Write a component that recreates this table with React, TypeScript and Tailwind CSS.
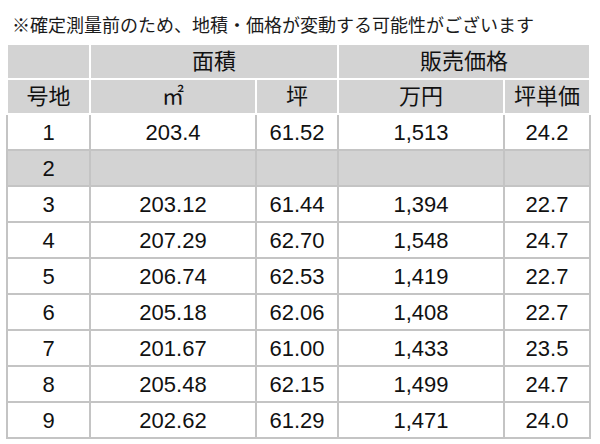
import React from 'react';

type Lot = {
  no: string;
  sqm: string;
  tsubo: string;
  price: string;
  unit: string;
};

const lots: Lot[] = [
  { no: '1', sqm: '203.4', tsubo: '61.52', price: '1,513', unit: '24.2' },
  { no: '2', sqm: '', tsubo: '', price: '', unit: '' },
  { no: '3', sqm: '203.12', tsubo: '61.44', price: '1,394', unit: '22.7' },
  { no: '4', sqm: '207.29', tsubo: '62.70', price: '1,548', unit: '24.7' },
  { no: '5', sqm: '206.74', tsubo: '62.53', price: '1,419', unit: '22.7' },
  { no: '6', sqm: '205.18', tsubo: '62.06', price: '1,408', unit: '22.7' },
  { no: '7', sqm: '201.67', tsubo: '61.00', price: '1,433', unit: '23.5' },
  { no: '8', sqm: '205.48', tsubo: '62.15', price: '1,499', unit: '24.7' },
  { no: '9', sqm: '202.62', tsubo: '61.29', price: '1,471', unit: '24.0' },
];

const font = { fontFamily: '"Liberation Sans", "Noto Sans CJK JP", sans-serif' };

export default function App() {
  return (
    <div className="w-[600px] h-[444px] bg-white text-[#111] overflow-hidden" style={font}>
      <p className="pl-[12px] pt-[14px] h-[43px] text-[18px] leading-[24px] text-[#1a1a1a]">
        ※確定測量前のため、地積・価格が変動する可能性がございます
      </p>

      <table className="ml-[6px] w-[583px] table-fixed border-collapse text-center">
        <colgroup>
          <col className="w-[83px]" />
          <col className="w-[166px]" />
          <col className="w-[82px]" />
          <col className="w-[166px]" />
          <col className="w-[86px]" />
        </colgroup>
        <thead className="text-[22px]">
          <tr className="h-[35px]">
            <th className="bg-[#d3d3d3] border-2 border-white font-normal"></th>
            <th colSpan={2} className="bg-[#d3d3d3] border-2 border-white font-normal">面積</th>
            <th colSpan={2} className="bg-[#d3d3d3] border-2 border-white font-normal">販売価格</th>
          </tr>
          <tr className="h-[34px]">
            <th className="bg-[#d3d3d3] border-2 border-white font-normal">号地</th>
            <th className="bg-[#d3d3d3] border-2 border-white font-normal">㎡</th>
            <th className="bg-[#d3d3d3] border-2 border-white font-normal">坪</th>
            <th className="bg-[#d3d3d3] border-2 border-white font-normal">万円</th>
            <th className="bg-[#d3d3d3] border-2 border-white font-normal">坪単価</th>
          </tr>
        </thead>
        <tbody className="text-[22px]">
          {lots.map((lot) => {
            const blank = lot.sqm === '';
            const cell = `border-2 border-[#c4c4c4] ${blank ? 'bg-[#d3d3d3]' : 'bg-white'}`;
            return (
              <tr key={lot.no} className="h-[36px]">
                <td className={cell}>{lot.no}</td>
                <td className={cell}>{lot.sqm}</td>
                <td className={cell}>{lot.tsubo}</td>
                <td className={cell}>{lot.price}</td>
                <td className={cell}>{lot.unit}</td>
              </tr>
            );
          })}
        </tbody>
      </table>
    </div>
  );
}
